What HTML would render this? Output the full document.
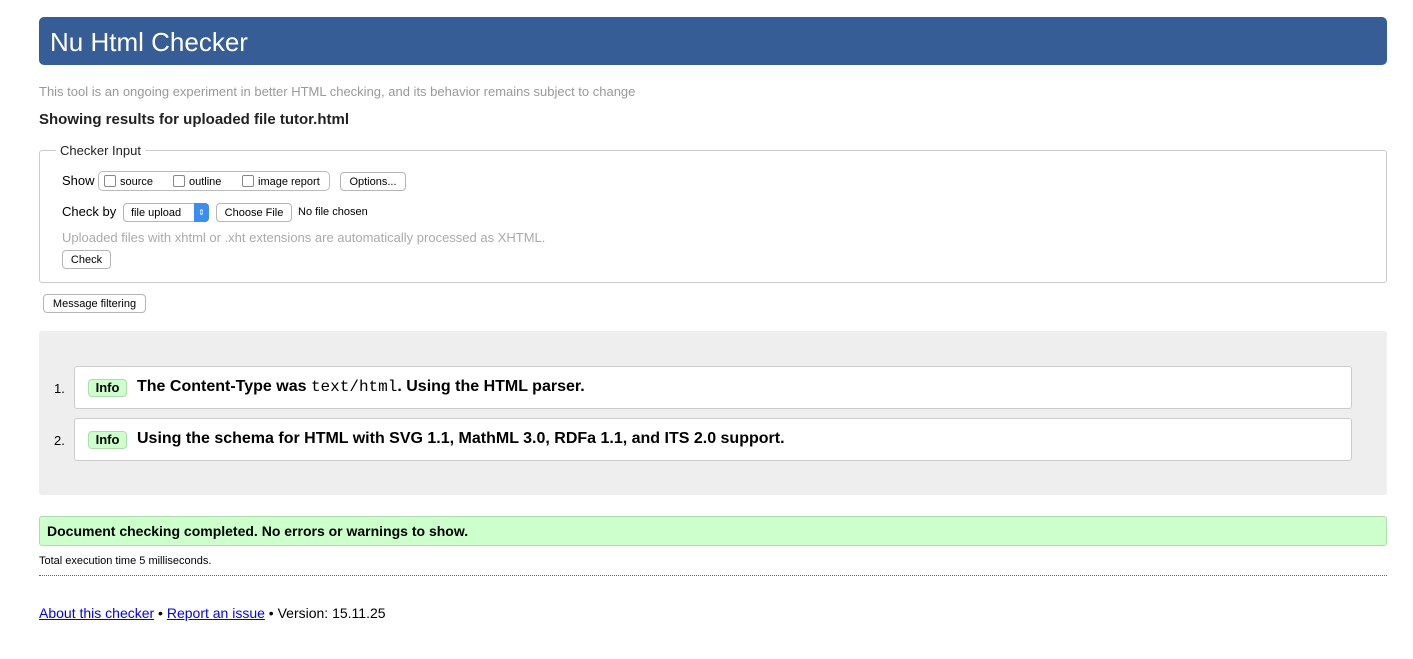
<!DOCTYPE html>
<html><head><meta charset="utf-8"><style>
body{margin:0;width:1413px;height:659px;background:#fff;font-family:"Liberation Sans",sans-serif;position:relative;overflow:hidden;color:#000}
.a{position:absolute;white-space:nowrap}
.hdr{left:39px;top:17px;width:1348px;height:48px;background:#365d95;border-radius:5px}
.hdr span{position:absolute;left:11px;top:10px;color:#fff;font-size:26px}
.btn{position:absolute;border:1px solid #b5b5b5;border-radius:4px;background:#fff;font-size:11px;line-height:18px;text-align:center;box-sizing:border-box;height:19px}
.cb{display:inline-block;width:10px;height:10px;border:1px solid #888;border-radius:2px;vertical-align:-2px;margin-right:4px;background:#fff}
.msg{position:absolute;left:74px;width:1278px;height:43px;background:#fff;border:1px solid #ccc;border-radius:3px;box-sizing:border-box}
.info{position:absolute;left:13px;top:12px;width:39px;height:18px;background:#ccffcc;border:1px solid #aedcae;border-radius:4px;box-sizing:border-box;font-size:13px;font-weight:bold;text-align:center;line-height:16px}
.mt{position:absolute;left:62px;top:11px;font-size:16px;font-weight:bold}
</style></head><body>
<div class="a hdr"><span>Nu Html Checker</span></div>
<div class="a" style="left:39px;top:84px;font-size:13px;color:#999">This tool is an ongoing experiment in better HTML checking, and its behavior remains subject to change</div>
<div class="a" style="left:39px;top:111px;font-size:15px;font-weight:bold;color:#222">Showing results for uploaded file tutor.html</div>
<div class="a" style="left:39px;top:150px;width:1348px;height:133px;border:1px solid #ccc;border-radius:3px;box-sizing:border-box"></div>
<div class="a" style="left:56px;top:143px;background:#fff;padding:0 4px;font-size:13px;color:#222">Checker Input</div>
<div class="a" style="left:62px;top:173px;font-size:13px">Show</div>
<div class="a" style="left:98px;top:171px;width:232px;height:20px;border:1px solid #bbb;border-radius:5px;box-sizing:border-box"></div>
<div class="a" style="left:104px;top:175px;font-size:11px"><span class="cb"></span>source</div>
<div class="a" style="left:173px;top:175px;font-size:11px"><span class="cb"></span>outline</div>
<div class="a" style="left:242px;top:175px;font-size:11px"><span class="cb"></span>image report</div>
<div class="btn" style="left:340px;top:172px;width:66px">Options...</div>
<div class="a" style="left:62px;top:204px;font-size:13px">Check by</div>
<div class="btn" style="left:123px;top:203px;width:86px;text-align:left;padding-left:7px">file upload<span style="position:absolute;right:-1px;top:-1px;width:15px;height:19px;background:#3b8ef0;border-radius:0 4px 4px 0;color:#fff;font-size:8px;line-height:19px;text-align:center">⇕</span></div>
<div class="btn" style="left:216px;top:203px;width:76px">Choose File</div>
<div class="a" style="left:298px;top:206px;font-size:11px">No file chosen</div>
<div class="a" style="left:62px;top:230px;font-size:13px;color:#aaa">Uploaded files with xhtml or .xht extensions are automatically processed as XHTML.</div>
<div class="btn" style="left:62px;top:250px;width:49px">Check</div>
<div class="btn" style="left:43px;top:294px;width:103px">Message filtering</div>
<div class="a" style="left:39px;top:331px;width:1348px;height:164px;background:#eee;border-radius:3px"></div>
<div class="a" style="left:54px;top:381px;font-size:13px">1.</div>
<div class="msg" style="top:366px"><div class="info">Info</div><div class="mt">The Content-Type was <span style="font-family:'Liberation Mono',monospace;font-weight:normal">text/html</span>. Using the HTML parser.</div></div>
<div class="a" style="left:54px;top:433px;font-size:13px">2.</div>
<div class="msg" style="top:418px"><div class="info">Info</div><div class="mt">Using the schema for HTML with SVG 1.1, MathML 3.0, RDFa 1.1, and ITS 2.0 support.</div></div>
<div class="a" style="left:39px;top:516px;width:1348px;height:30px;background:#ccffcc;border:1px solid #aedcae;border-radius:3px;box-sizing:border-box"></div>
<div class="a" style="left:47px;top:523px;font-size:14px;font-weight:bold">Document checking completed. No errors or warnings to show.</div>
<div class="a" style="left:39px;top:555px;font-size:11px">Total execution time 5 milliseconds.</div>
<div class="a" style="left:39px;top:575px;width:1348px;border-top:1px dotted #666"></div>
<div class="a" style="left:39px;top:605px;font-size:14px"><span style="color:#00e;text-decoration:underline">About this checker</span> • <span style="color:#00e;text-decoration:underline">Report an issue</span> • Version: 15.11.25</div>
</body></html>
